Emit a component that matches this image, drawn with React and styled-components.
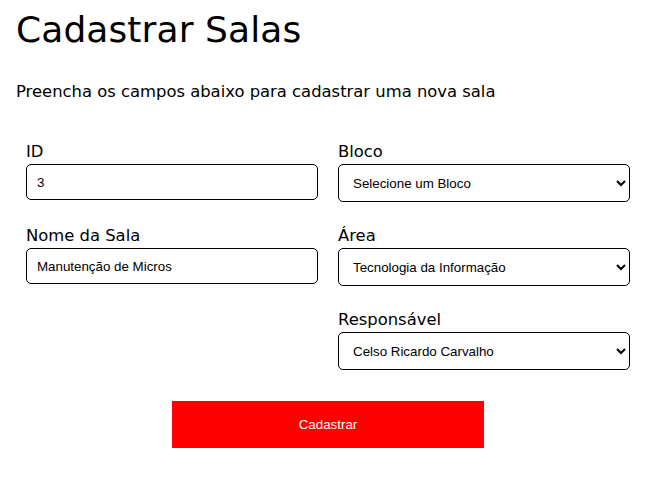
import React from "react";
import styled, { createGlobalStyle } from "styled-components";

const Global = createGlobalStyle`
  html, body { margin: 0; padding: 0; background: #fff; }
  body { font-family: "DejaVu Sans", "Noto Sans", sans-serif; color: #000; }
`;

const Page = styled.main`
  padding: 0 16px;
`;

const Title = styled.h1`
  margin: 0;
  padding-top: 6px;
  font-size: 36px;
  font-weight: 500;
  line-height: 48px;
  letter-spacing: 0.1px;
`;

const Subtitle = styled.p`
  margin: 26px 0 0;
  font-size: 16.4px;
  line-height: 24px;
  font-weight: 400;
`;

const Form = styled.form`
  margin: 36px 0 0 10px;
  width: 604px;
  display: grid;
  grid-template-columns: 292px 292px;
  column-gap: 20px;
  row-gap: 22px;
`;

const Field = styled.div`
  display: flex;
  flex-direction: column;
  grid-column: ${(p) => p.col};
  grid-row: ${(p) => p.row};
`;

const Label = styled.label`
  font-size: 16.4px;
  line-height: 24px;
  color: #000;
`;

const controlBase = `
  box-sizing: border-box;
  width: 100%;
  border: 1px solid #000;
  border-radius: 5px;
  padding: 10px;
  font-family: "Liberation Sans", Arial, sans-serif;
  font-size: 13.333px;
  color: #000;
  background: #fff;
  outline: none;
`;

const Input = styled.input`
  ${controlBase}
  height: 36px;
`;

const Select = styled.select`
  ${controlBase}
  height: 38px;
`;

const Actions = styled.div`
  grid-column: 1 / span 2;
  display: flex;
  justify-content: center;
  padding-top: 9px;
`;

const Button = styled.button`
  width: 312px;
  height: 47px;
  border: none;
  background: #ff0000;
  color: #fff;
  font-family: "Liberation Sans", Arial, sans-serif;
  font-size: 13.333px;
  cursor: pointer;
`;

export default function App() {
  return (
    <>
      <Global />
      <Page>
        <Title>Cadastrar Salas</Title>
        <Subtitle>Preencha os campos abaixo para cadastrar uma nova sala</Subtitle>
        <Form onSubmit={(e) => e.preventDefault()}>
          <Field col={1} row={1}>
            <Label htmlFor="id">ID</Label>
            <Input id="id" defaultValue="3" />
          </Field>
          <Field col={2} row={1}>
            <Label htmlFor="bloco">Bloco</Label>
            <Select id="bloco" defaultValue="">
              <option value="">Selecione um Bloco</option>
            </Select>
          </Field>
          <Field col={1} row={2}>
            <Label htmlFor="nome">Nome da Sala</Label>
            <Input id="nome" defaultValue="Manutenção de Micros" />
          </Field>
          <Field col={2} row={2}>
            <Label htmlFor="area">Área</Label>
            <Select id="area" defaultValue="ti">
              <option value="ti">Tecnologia da Informação</option>
            </Select>
          </Field>
          <Field col={2} row={3}>
            <Label htmlFor="resp">Responsável</Label>
            <Select id="resp" defaultValue="celso">
              <option value="celso">Celso Ricardo Carvalho</option>
            </Select>
          </Field>
          <Actions>
            <Button type="submit">Cadastrar</Button>
          </Actions>
        </Form>
      </Page>
    </>
  );
}
